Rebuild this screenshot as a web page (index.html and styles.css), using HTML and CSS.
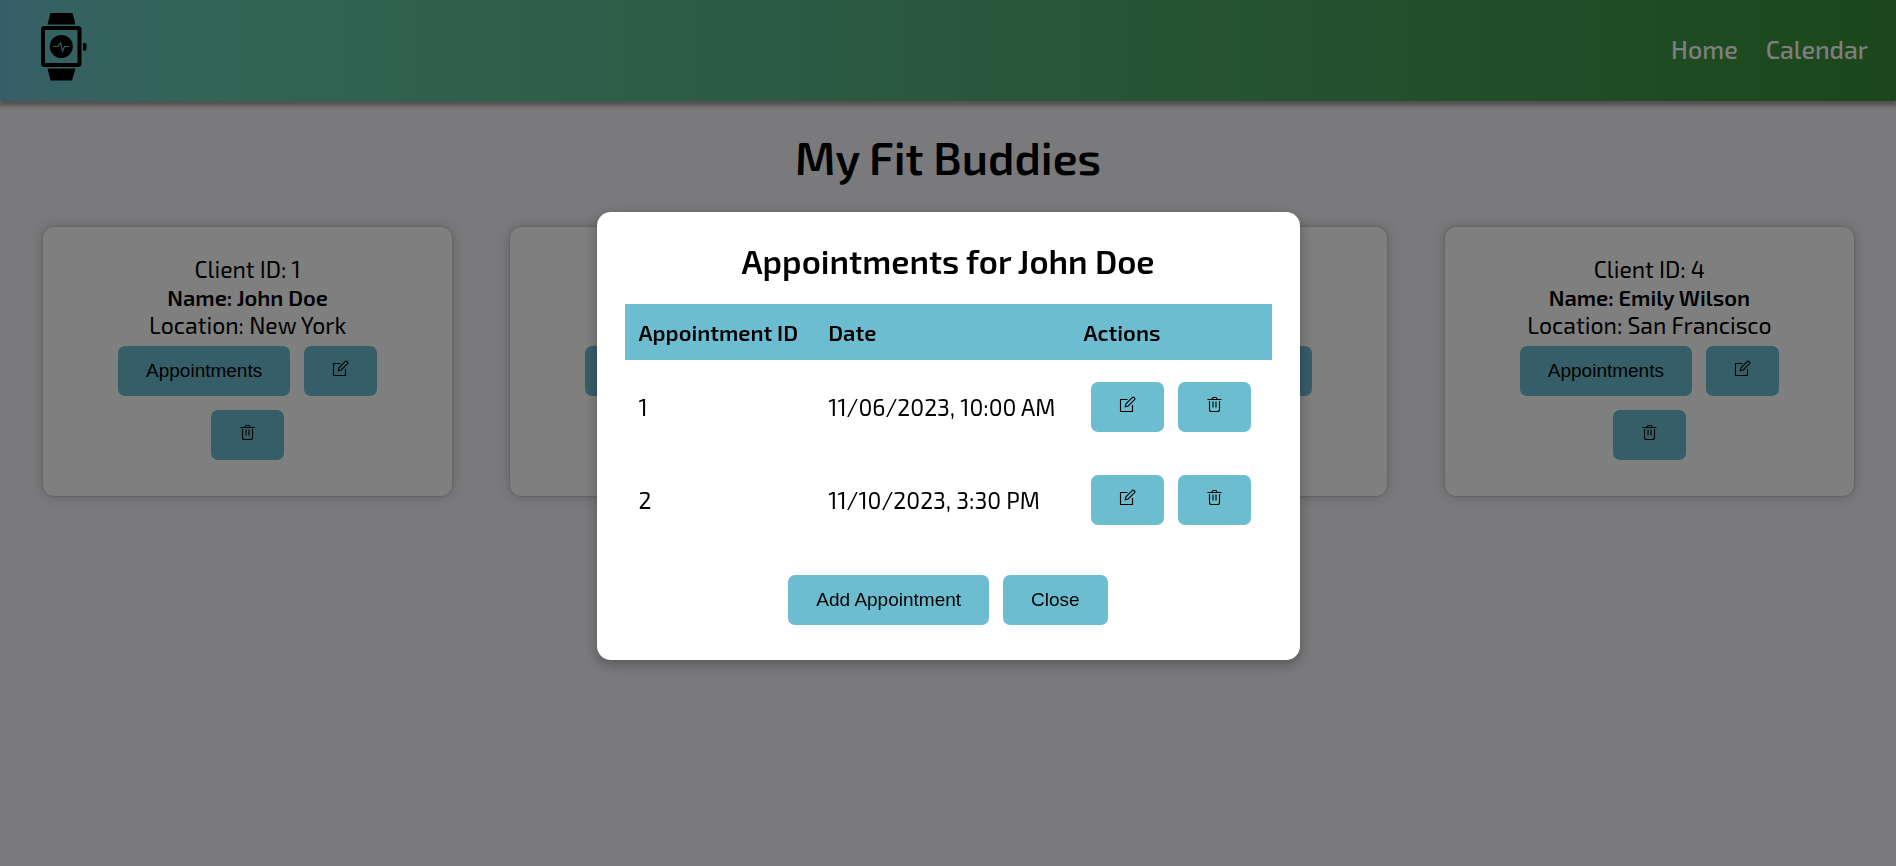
FILE: index.html
```html
<!DOCTYPE html>
<html lang="en">
<head>
<meta charset="utf-8">
<meta name="viewport" content="width=device-width, initial-scale=1">
<title>My Fit Buddies</title>
<link rel="stylesheet" href="styles.css">
</head>
<body>
<svg class="sprite" aria-hidden="true">
  <symbol id="edit" viewBox="0 0 17 17">
    <path d="M8.500 3.500h-7v12h12V9"/>
    <path d="M6.200 10.800l.8-3 6.400-6.400a1 1 0 0 1 1.400 0l.8.8a1 1 0 0 1 0 1.400L9.200 10z"/>
  </symbol>
  <symbol id="trash" viewBox="0 0 17 17">
    <path d="M1.500 3.500h14M5.800 3.300c.3-1.300 1-1.800 1.700-1.800h2c.7 0 1.400.5 1.700 1.800M3.500 5v8.500c0 1.200.7 2 1.900 2h6.200c1.200 0 1.900-.8 1.900-2V5M7 5.500v6M10 5.500v6"/>
  </symbol>
</svg>
<header class="header">
  <a class="logo" href="#" aria-label="Fit Buddies">
    <svg class="logo-mark" viewBox="0 0 46 68" aria-hidden="true">
      <path d="M9.500 0h22l3 11.500h-28zM6.500 55.500h28L31 67.500H9.500z"/>
      <path fill-rule="evenodd" d="M3.500 13h33.500a3.500 3.500 0 0 1 3.500 3.500v34a3.500 3.500 0 0 1-3.500 3.500H3.500A3.500 3.500 0 0 1 0 50.500v-34A3.500 3.500 0 0 1 3.500 13zM4 17v33h32.500V17z"/>
      <circle cx="20.300" cy="33.500" r="11.500"/>
      <path d="M42 30h2a1.500 1.500 0 0 1 1.500 1.500v4.500a1.500 1.500 0 0 1-1.500 1.500h-2z"/>
      <path class="pulse" d="M12 33.500h5l2.500-3.500 2 8 2-4.500h5"/>
    </svg>
  </a>
  <nav class="nav"><a href="#">Home</a><a href="#">Calendar</a></nav>
</header>
<main>
  <h1 class="page-title">My Fit Buddies</h1>
  <div class="cards">
    <article class="card">
      <p>Client ID: 1</p><p class="name">Name: John Doe</p><p>Location: New York</p>
      <div class="buttons"><button class="btn">Appointments</button><button class="btn" aria-label="Edit"><svg class="icon"><use href="#edit"/></svg></button><button class="btn" aria-label="Delete"><svg class="icon"><use href="#trash"/></svg></button></div>
    </article>
    <article class="card">
      <p>Client ID: 2</p><p class="name">Name:</p><p>Location:</p>
      <div class="buttons"><button class="btn">Appointments</button><button class="btn" aria-label="Edit"><svg class="icon"><use href="#edit"/></svg></button><button class="btn" aria-label="Delete"><svg class="icon"><use href="#trash"/></svg></button></div>
    </article>
    <article class="card">
      <p>Client ID: 3</p><p class="name">Name:</p><p>Location:</p>
      <div class="buttons"><button class="btn">Appointments</button><button class="btn" aria-label="Edit"><svg class="icon"><use href="#edit"/></svg></button><button class="btn" aria-label="Delete"><svg class="icon"><use href="#trash"/></svg></button></div>
    </article>
    <article class="card">
      <p>Client ID: 4</p><p class="name">Name: Emily Wilson</p><p>Location: San Francisco</p>
      <div class="buttons"><button class="btn">Appointments</button><button class="btn" aria-label="Edit"><svg class="icon"><use href="#edit"/></svg></button><button class="btn" aria-label="Delete"><svg class="icon"><use href="#trash"/></svg></button></div>
    </article>
  </div>
</main>
<div class="overlay">
  <section class="modal" role="dialog" aria-modal="true" aria-labelledby="modal-title">
    <h2 class="modal-title" id="modal-title">Appointments for John Doe</h2>
    <table class="table">
      <thead><tr><th class="col-id">Appointment ID</th><th class="col-date">Date</th><th>Actions</th></tr></thead>
      <tbody>
        <tr><td>1</td><td>11/06/2023, 10:00 AM</td><td><div class="buttons"><button class="btn" aria-label="Edit"><svg class="icon"><use href="#edit"/></svg></button><button class="btn" aria-label="Delete"><svg class="icon"><use href="#trash"/></svg></button></div></td></tr>
        <tr><td>2</td><td>11/10/2023, 3:30 PM</td><td><div class="buttons"><button class="btn" aria-label="Edit"><svg class="icon"><use href="#edit"/></svg></button><button class="btn" aria-label="Delete"><svg class="icon"><use href="#trash"/></svg></button></div></td></tr>
      </tbody>
    </table>
    <div class="buttons modal-actions"><button class="btn">Add Appointment</button><button class="btn">Close</button></div>
  </section>
</div>
</body>
</html>
```
FILE: styles.css
```css
* { box-sizing: border-box; margin: 0; padding: 0; }
body {
  min-height: 100vh;
  background: #f4f4f9;
  color: #000;
  font-family: "Exo 2", "Noto Sans", sans-serif;
  font-size: 23px;
  line-height: 28px;
}
.sprite { display: none; }
.header {
  display: flex;
  align-items: center;
  justify-content: space-between;
  padding: 13px 28px 20px 41px;
  background: linear-gradient(90deg, #6dbdd1 0%, #66cbae 10%, #388f38 100%);
  box-shadow: 0 4px 4px 1px rgba(80, 60, 65, 0.45);
}
.logo { display: block; color: #000; }
.logo-mark { display: block; width: 46px; height: 68px; }
.pulse { fill: none; stroke: #6ac0b8; stroke-width: 1.2; }
.nav { display: flex; gap: 28px; padding-top: 4px; }
.nav a { color: #fff; font-size: 25px; font-weight: 500; text-decoration: none; }
.page-title {
  padding: 28px 0 42px;
  font-size: 45px;
  font-weight: 600;
  line-height: 56px;
  text-align: center;
}
.cards {
  display: grid;
  grid-template-columns: repeat(4, 1fr);
  gap: 58px;
  padding: 0 42px 0 43px;
}
.card {
  padding: 28px 28px 29px;
  background: #fff;
  border-radius: 11px;
  box-shadow: 0 0 14px rgba(0, 0, 0, 0.2), 0 0 2px rgba(0, 0, 0, 0.3);
  text-align: center;
}
.name { font-size: 22px; font-weight: 600; }
.buttons {
  display: flex;
  flex-wrap: wrap;
  justify-content: center;
  gap: 14px;
  padding: 7px;
}
.btn {
  min-height: 50px;
  padding: 0 28px;
  border: 0;
  border-radius: 7px;
  background: #6dbdd1;
  color: #000;
  font-family: "Liberation Sans", Arial, sans-serif;
  font-size: 19px;
  cursor: pointer;
}
.icon {
  display: block;
  width: 17px;
  height: 17px;
  margin-bottom: 5px;
  fill: none;
  stroke: #000;
  stroke-width: 1.1;
}
.overlay {
  position: fixed;
  inset: 0;
  display: flex;
  align-items: center;
  justify-content: center;
  padding-top: 6px;
  background: rgba(0, 0, 0, 0.5);
}
.modal {
  width: 100%;
  max-width: 703px;
  padding: 28px;
  background: #fff;
  border-radius: 14px;
  box-shadow: 0 4px 14px rgba(0, 0, 0, 0.3);
}
.modal-title {
  padding-bottom: 22px;
  font-size: 33px;
  font-weight: 600;
  line-height: 42px;
  text-align: center;
}
.table { width: 100%; border-collapse: collapse; text-align: left; white-space: nowrap; }
.table th { padding: 14px; background: #6dbdd1; font-size: 22px; font-weight: 600; }
.table td { height: 93px; padding: 14px; }
.table .buttons { flex-wrap: nowrap; }
.col-id { width: 190px; }
.col-date { width: 253px; }
.modal-actions { padding-top: 29px; }
```
